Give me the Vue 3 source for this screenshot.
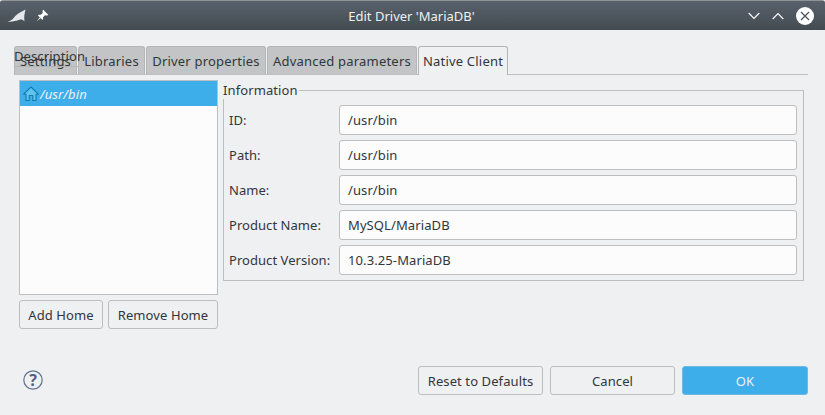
<script setup>
const tabs = [
  { label: 'Settings', width: 63 },
  { label: 'Libraries', width: 67 },
  { label: 'Driver properties', width: 120 },
  { label: 'Advanced parameters', width: 150 },
  { label: 'Native Client', width: 90, active: true },
]
const fields = [
  ['ID:', '/usr/bin'],
  ['Path:', '/usr/bin'],
  ['Name:', '/usr/bin'],
  ['Product Name:', 'MySQL/MariaDB'],
  ['Product Version:', '10.3.25-MariaDB'],
]
</script>

<template>
  <div class="win">
    <header class="titlebar">
      <div class="tb-left">
        <svg width="20" height="14" viewBox="0 0 20 14" class="logo">
          <path d="M0.5 12.5 C3 12.3 5 11 7 8.5 C9 6 11.5 4.2 14 3 C15.5 2.3 17 1.5 18.5 0.5 C18.2 2.5 17.6 4 17.4 6 C17.2 8 17.2 10 17.5 12.5 C16 10.8 14.5 10.2 12.5 10.8 C9 12 4 13.2 0.5 12.5Z" fill="#e4e8ec" />
        </svg>
        <svg width="13" height="13" viewBox="0 0 12 12">
          <path d="M6.5 0.5 L11.5 5.5 L10 6 L8.3 5.8 L6.5 7.5 L6.6 9.5 L5.8 10 L1.8 6 L2.5 5.4 L4.4 5.4 L6.2 3.6 L6 2 Z M3.6 7.6 L0.6 11.4 L4.4 8.4 Z" fill="#fff" />
        </svg>
      </div>
      <div class="title">Edit Driver 'MariaDB'</div>
      <div class="tb-right">
        <svg width="12" height="8" viewBox="0 0 12 8"><path d="M0.7 1 L6 6.5 L11.3 1" fill="none" stroke="#fff" stroke-width="1.1" /></svg>
        <svg width="12" height="8" viewBox="0 0 12 8"><path d="M0.7 7 L6 1.5 L11.3 7" fill="none" stroke="#fff" stroke-width="1.1" /></svg>
        <svg width="18" height="18" viewBox="0 0 18 18">
          <circle cx="9" cy="9" r="9" fill="#fff" />
          <path d="M5 5 L13 13 M13 5 L5 13" stroke="#4b545b" stroke-width="1.3" />
        </svg>
      </div>
    </header>

    <main class="content">
      <div class="tabbar">
        <div
          v-for="t in tabs"
          :key="t.label"
          class="tab"
          :class="{ active: t.active }"
          :style="{ width: t.width + 'px' }"
        >{{ t.label }}</div>
        <span class="stray">Description</span>
      </div>

      <div class="panel">
        <div class="left">
          <div class="list">
            <div class="row">
              <svg width="16" height="16" viewBox="0 0 16 16">
                <path d="M8 1 L15.3 8.2 L13 8.2 L13 14.5 L9.8 14.5 L9.8 9.5 L6.2 9.5 L6.2 14.5 L3 14.5 L3 8.2 L0.7 8.2 Z" fill="#62c3ee" stroke="#0f7cb0" stroke-width="1.1" stroke-linejoin="round" />
              </svg>
              <span>/usr/bin</span>
            </div>
          </div>
          <div class="left-btns">
            <button class="btn add">Add Home</button>
            <button class="btn remove">Remove Home</button>
          </div>
        </div>

        <fieldset class="group">
          <legend>Information</legend>
          <div v-for="f in fields" :key="f[0]" class="field">
            <label>{{ f[0] }}</label>
            <div class="input">{{ f[1] }}</div>
          </div>
        </fieldset>
      </div>
    </main>

    <footer class="footer">
      <svg class="help" width="20" height="20" viewBox="0 0 20 20">
        <circle cx="10" cy="10" r="9.2" fill="none" stroke="#5f7190" stroke-width="1.2" />
        <text x="10" y="15.5" text-anchor="middle" class="help-q">?</text>
      </svg>
      <div class="foot-btns">
        <button class="btn foot">Reset to Defaults</button>
        <button class="btn foot">Cancel</button>
        <button class="btn foot ok">OK</button>
      </div>
    </footer>
  </div>
</template>

<style scoped>
.win {
  width: 825px;
  height: 415px;
  background: #eff0f1;
  color: #31363b;
  font: 13px/18px "Noto Sans", sans-serif;
  letter-spacing: 0.1px;
  display: flex;
  flex-direction: column;
  overflow: hidden;
  border-radius: 3px 3px 2px 2px;
}
.titlebar {
  height: 30px;
  flex: none;
  box-sizing: border-box;
  border-top: 1px solid #8f9499;
  background: linear-gradient(#59626b, #434b52);
  display: flex;
  align-items: center;
  padding: 0 11px 0 7px;
  position: relative;
}
.tb-left { display: flex; align-items: center; gap: 9px; }
.logo { margin-top: 1px; }
.title {
  position: absolute;
  left: 0;
  right: 2px;
  text-align: center;
  color: #eff0f1;
  font-size: 13px;
  letter-spacing: 0;
}
.tb-right {
  margin-left: auto;
  display: flex;
  align-items: center;
  gap: 12px;
  position: relative;
}
.content {
  padding: 16px 17px 0 14px;
  flex: 1;
}
.tabbar {
  display: flex;
  height: 29px;
  box-sizing: border-box;
  border-bottom: 1px solid #bcbebf;
  gap: 1px;
  position: relative;
}
.tab {
  height: 28px;
  box-sizing: border-box;
  background: #c3c4c5;
  border: 1px solid #b4b5b6;
  border-bottom: none;
  border-radius: 3px 3px 0 0;
  text-align: center;
  line-height: 28px;
  white-space: nowrap;
  letter-spacing: 0.2px;
}
.tab.active {
  background: #eff0f1;
  height: 29px;
  position: relative;
  z-index: 1;
}
.stray {
  position: absolute;
  left: 0;
  top: 1px;
  width: 64px;
  height: 19px;
  line-height: 18px;
  white-space: nowrap;
  border-bottom: 1px solid #b4b5b6;
}
.panel {
  display: flex;
  padding: 5px 0 0 5px;
  gap: 5px;
}
.left { width: 199px; }
.list {
  height: 215px;
  box-sizing: border-box;
  background: #fcfcfc;
  border: 1px solid #bcbebf;
}
.row {
  height: 25px;
  background: #3daee9;
  color: #eff0f1;
  font-style: italic;
  display: flex;
  align-items: center;
  gap: 1px;
  padding-left: 3px;
}
.left-btns {
  display: flex;
  gap: 5px;
  margin-top: 5px;
}
.btn {
  height: 29px;
  box-sizing: border-box;
  background: #eff0f1;
  border: 1px solid #bcbebf;
  border-radius: 3px;
  font: inherit;
  letter-spacing: inherit;
  color: #31363b;
  padding: 0;
}
.add { width: 84px; }
.remove { width: 110px; }
.group {
  margin: 10px 0 0;
  padding: 15px 5px 0;
  width: 581px;
  height: 191px;
  box-sizing: border-box;
  border: 1px solid #bcbebf;
  border-top: 0;
  min-width: 0;
  position: relative;
}
.group::before {
  content: "";
  position: absolute;
  top: 0;
  left: 74px;
  right: -1px;
  border-top: 1px solid #bcbebf;
}
legend {
  padding: 0 1px 0 0;
  position: absolute;
  left: -1px;
  top: -9px;
  line-height: 18px;
  background: #eff0f1;
}
.field {
  display: flex;
  align-items: center;
  height: 30px;
  margin: 0 0 5px;
}
.field label { width: 110px; flex: none; letter-spacing: 0.05px; }
.input {
  width: 458px;
  height: 30px;
  box-sizing: border-box;
  background: #fcfcfc;
  border: 1px solid #bcbebf;
  border-radius: 3px;
  padding-left: 8px;
  line-height: 28px;
}
.footer {
  height: 49px;
  flex: none;
  display: flex;
  align-items: flex-start;
  justify-content: space-between;
  padding: 0 17px 0 23px;
  box-sizing: border-box;
}
.help { margin-top: 4px; }
.help-q {
  font: bold 16px "Noto Sans", sans-serif;
  fill: #4f6282;
}
.foot-btns {
  display: flex;
  gap: 7px;
}
.foot { width: 125px; }
.ok {
  width: 126px;
  background: #3daee9;
  border-color: #6fb9e0;
  color: #eff0f1;
}
</style>

<style>
html, body { margin: 0; background: #eff0f1; }
</style>
